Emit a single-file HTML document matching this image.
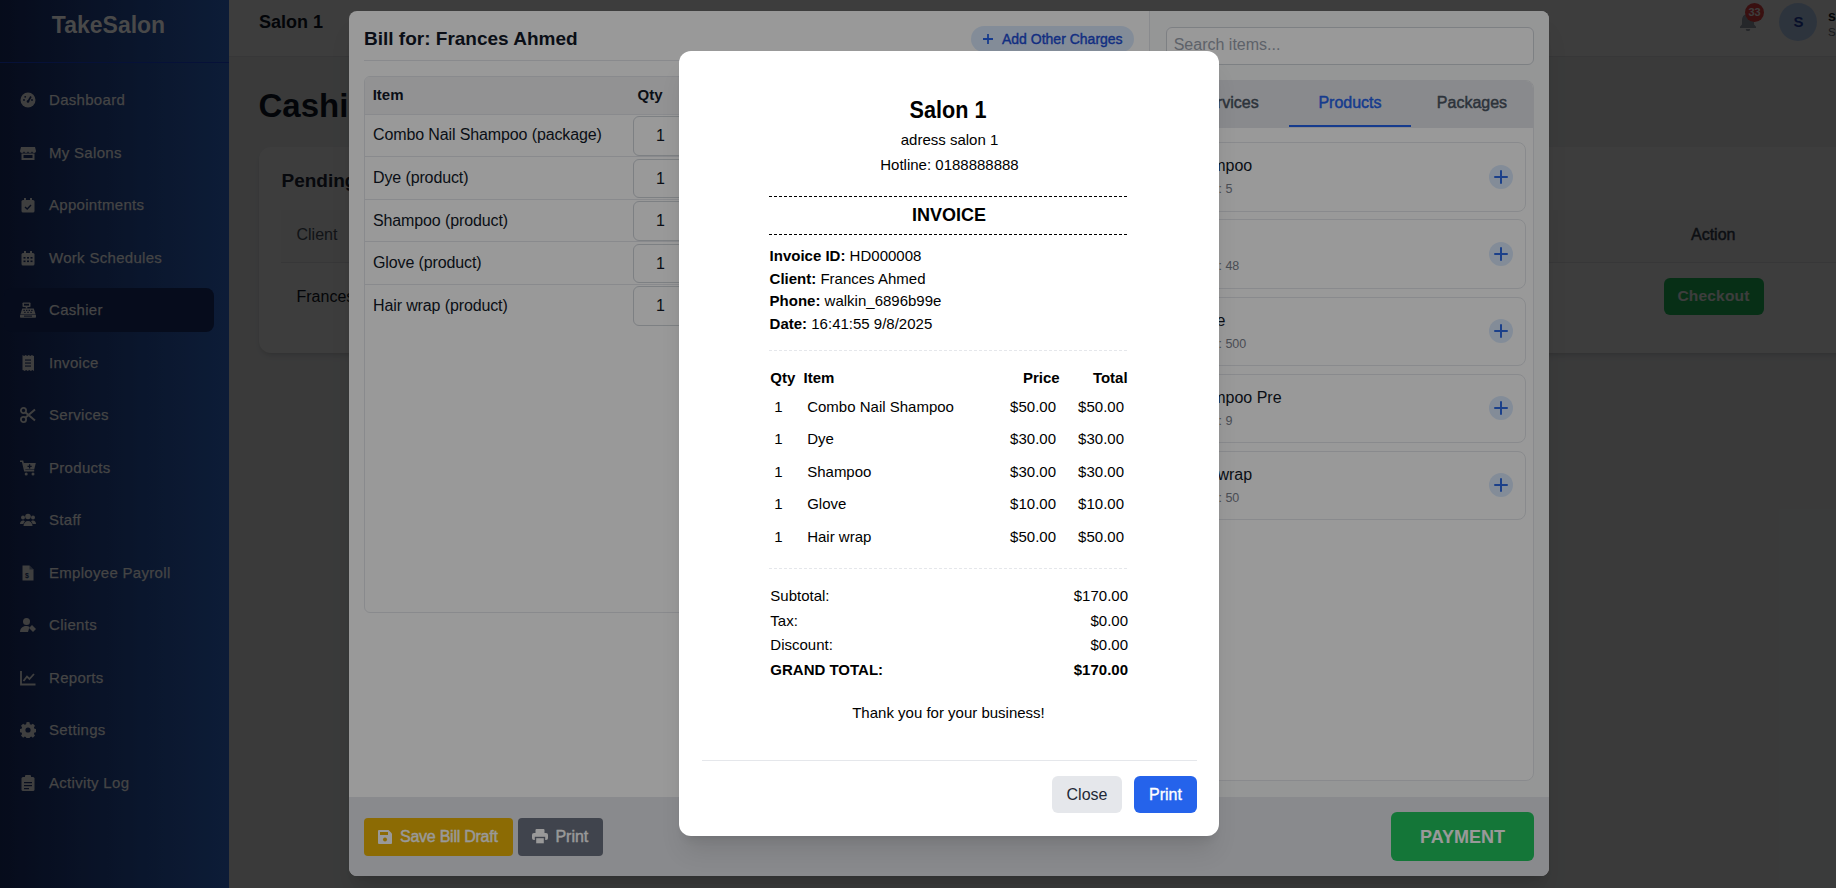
<!DOCTYPE html>
<html><head><meta charset="utf-8">
<style>
*{box-sizing:border-box;margin:0;padding:0}
html,body{width:1836px;height:888px;overflow:hidden}
body{position:relative;font-family:"Liberation Sans",sans-serif;background:#f3f4f6;color:#111827}
.abs{position:absolute}
/* sidebar */
#sb{position:absolute;left:0;top:0;width:229px;height:888px;background:linear-gradient(90deg,#0b142e 0%,#16305d 100%)}
#sb .logo{position:absolute;left:0;top:0;width:217px;height:62px;border-bottom:0;text-align:center;font-size:23px;font-weight:700;color:#7a7a7a;line-height:50px}
#sb .it{position:absolute;left:4px;width:210px;height:44px;border-radius:8px;color:#737373;font-size:15px;letter-spacing:.3px;-webkit-text-stroke:.25px #737373}
#sb .it span{position:absolute;left:45px;top:0;line-height:44.6px}
#sb .it svg{position:absolute;left:16px;top:14px;width:16px;height:16px;fill:#6a6a6a}
#sb .act{background:#0a1430}
/* header */
#hd{position:absolute;left:229px;top:0;width:1607px;height:57px;background:#fff;border-bottom:1px solid #e5e7eb}
#main{position:absolute;left:229px;top:56px;width:1607px;height:832px}
#ov1{position:absolute;left:229px;top:0;width:1607px;height:888px;background:rgba(0,0,0,0.6)}
/* bill modal */
#bill{position:absolute;left:349px;top:11px;width:1200px;height:865px;background:#fff;border-radius:8px;box-shadow:0 20px 25px -5px rgba(0,0,0,.1),0 8px 10px -6px rgba(0,0,0,.1);overflow:hidden}
#ov2{position:absolute;left:0;top:0;width:1836px;height:888px;background:rgba(0,0,0,0.4)}
#inv{position:absolute;left:679px;top:51px;width:540px;height:785px;background:#fff;border-radius:12px;box-shadow:0 20px 25px -5px rgba(0,0,0,.1),0 8px 10px -6px rgba(0,0,0,.1)}

#bill .brow:last-child{border-bottom:0}
#bill .brow{left:0;width:770px;height:42.6px;border-bottom:1px solid #e5e7eb;color:#111827}
#bill .qin{width:120px;height:39.6px;border:1px solid #d1d5db;border-radius:6px}
#bill .qin span{position:absolute;right:86.5px;top:9px;font-size:16px;line-height:20px}
#bill .tab{top:-1px;width:122.6px;height:46.7px;line-height:46.7px;text-align:center;font-size:16px;font-weight:400;-webkit-text-stroke:.45px currentColor}
#bill .card{left:7px;width:352px;height:69.3px;border:1px solid #e5e7eb;border-radius:8px}
#bill .pl{left:314px;top:21.7px;width:24px;height:24px;border-radius:50%;background:#dbeafe}
#bill .btn{height:38.6px;border-radius:4px;color:#fff;font-size:16px;font-weight:400;-webkit-text-stroke:.4px #fff;line-height:38.6px;white-space:nowrap}
#inv .dash{height:1px;background:repeating-linear-gradient(90deg,#000 0 3px,transparent 3px 5px)}
#inv .ldash{height:1px;background:repeating-linear-gradient(90deg,#e5e7eb 0 3px,transparent 3px 5px)}
#inv .ibtn{height:36.6px;border-radius:6px;font-size:16px;line-height:37.6px;text-align:center}
</style></head><body>

<div id="sb">
  <div class="logo">TakeSalon</div><div class="abs" style="left:0;top:62px;width:229px;height:1px;background:#0b1d5e"></div>
  <div class="it" style="top:78.0px"><svg viewBox="0 0 16 16"><circle cx="8" cy="8" r="7.5"/><path d="M8 9.5 L11 4.5" stroke="#0c1733" stroke-width="1.6"/><circle cx="8" cy="9.5" r="1.3" fill="#0c1733"/><circle cx="4" cy="8" r=".9" fill="#0c1733"/><circle cx="5.2" cy="4.8" r=".9" fill="#0c1733"/><circle cx="12" cy="8" r=".9" fill="#0c1733"/></svg><span>Dashboard</span></div>
  <div class="it" style="top:130.5px"><svg viewBox="0 0 16 16"><path d="M1 2h14l1 4c0 1.2-1 2-2 2s-2-.8-2-2c0 1.2-1 2-2 2s-2-.8-2-2c0 1.2-1 2-2 2s-2-.8-2-2c0 1.2-1 2-2 2S0 7.2 0 6z"/><path d="M1.5 8.5h13V15h-13z"/><rect x="3.5" y="10" width="9" height="3" fill="#0c1733"/></svg><span>My Salons</span></div>
  <div class="it" style="top:183.0px"><svg viewBox="0 0 16 16"><rect x="1.5" y="3" width="13" height="12.5" rx="1.5"/><rect x="4" y="1" width="2" height="3"/><rect x="10" y="1" width="2" height="3"/><path d="M5 10 L7.2 12 L11 8" stroke="#0c1733" stroke-width="1.4" fill="none"/></svg><span>Appointments</span></div>
  <div class="it" style="top:235.5px"><svg viewBox="0 0 16 16"><rect x="1.5" y="3" width="13" height="12.5" rx="1.5"/><rect x="4" y="1" width="2" height="3"/><rect x="10" y="1" width="2" height="3"/><g fill="#0c1733"><rect x="3.5" y="7" width="2" height="1.6"/><rect x="7" y="7" width="2" height="1.6"/><rect x="10.5" y="7" width="2" height="1.6"/><rect x="3.5" y="10.5" width="2" height="1.6"/><rect x="7" y="10.5" width="2" height="1.6"/><rect x="10.5" y="10.5" width="2" height="1.6"/></g></svg><span>Work Schedules</span></div>
  <div class="it act" style="top:288.0px"><svg viewBox="0 0 16 16"><rect x="2.5" y="0.5" width="8" height="4.5" rx=".8"/><rect x="4" y="1.8" width="5" height="1.8" fill="#0a1430"/><rect x="5.7" y="5" width="1.6" height="1.5"/><path d="M2.2 6.5h11.6l1.7 5.5H.5z"/><rect x="0" y="12.5" width="16" height="3.3" rx=".8"/><rect x="4" y="13.6" width="8" height="1" fill="#0a1430"/><g fill="#0a1430"><rect x="3.4" y="7.8" width="1.4" height="1.1"/><rect x="6" y="7.8" width="1.4" height="1.1"/><rect x="8.6" y="7.8" width="1.4" height="1.1"/><rect x="11.2" y="7.8" width="1.4" height="1.1"/><rect x="4.2" y="9.8" width="1.4" height="1.1"/><rect x="7.3" y="9.8" width="1.4" height="1.1"/><rect x="10.4" y="9.8" width="1.4" height="1.1"/></g></svg><span>Cashier</span></div>
  <div class="it" style="top:340.5px"><svg viewBox="0 0 16 16"><path d="M2.5 0l1.6 1 1.6-1 1.5 1 1.6-1 1.6 1 1.5-1 1.6 1 .5-.3V16l-1.6-1-1.5 1-1.6-1-1.6 1-1.5-1-1.6 1-1.6-1-.5.3z"/><g fill="#0c1733"><rect x="5" y="4.5" width="6" height="1.1"/><rect x="5" y="7.5" width="6" height="1.1"/><rect x="5" y="10.5" width="6" height="1.1"/></g></svg><span>Invoice</span></div>
  <div class="it" style="top:393.0px"><svg viewBox="0 0 16 16"><circle cx="3.5" cy="3.5" r="2.6" fill="none" stroke="#6a6a6a" stroke-width="1.8"/><circle cx="3.5" cy="12.5" r="2.6" fill="none" stroke="#6a6a6a" stroke-width="1.8"/><path d="M5.3 5.2 L15 13.5 M5.3 10.8 L15 2.5" stroke="#6a6a6a" stroke-width="2"/></svg><span>Services</span></div>
  <div class="it" style="top:445.5px"><svg viewBox="0 0 16 16"><path d="M0 1.2h2.6l2.2 9.6h9.4" fill="none" stroke="#6a6a6a" stroke-width="1.6"/><path d="M3.4 3h12.4l-1.6 6.6H4.9z"/><path d="M9.6 4.2v4.2M7.5 6.3h4.2" stroke="#0c1733" stroke-width="1.3"/><circle cx="6.2" cy="14" r="1.5"/><circle cx="13" cy="14" r="1.5"/></svg><span>Products</span></div>
  <div class="it" style="top:498.0px"><svg viewBox="0 0 16 16"><circle cx="8" cy="4.5" r="2.8"/><circle cx="3" cy="5.5" r="2"/><circle cx="13" cy="5.5" r="2"/><path d="M3.5 14c0-3 2-5 4.5-5s4.5 2 4.5 5z"/><path d="M0 12c0-2 1.3-3.5 3-3.5 1 0 1.5.3 2 .7-1 1-1.5 2-1.6 2.8z"/><path d="M16 12c0-2-1.3-3.5-3-3.5-1 0-1.5.3-2 .7 1 1 1.5 2 1.6 2.8z"/></svg><span>Staff</span></div>
  <div class="it" style="top:550.5px"><svg viewBox="0 0 16 16"><path d="M2.5 0.5h7l4 4v11h-11z"/><path d="M9.5 0.5v4h4" fill="#0c1733" opacity=".5"/><text x="5" y="13" font-size="7" font-family="Liberation Sans" fill="#0c1733" font-weight="700">$</text></svg><span>Employee Payroll</span></div>
  <div class="it" style="top:603.0px"><svg viewBox="0 0 16 16"><circle cx="6.5" cy="4.5" r="3.5"/><path d="M0 15c0-3.5 2.7-6 6-6 1.5 0 2.5.4 3.5 1l-1.5 5z"/><path d="M9 11l3-3 4 4-3 3z"/></svg><span>Clients</span></div>
  <div class="it" style="top:655.5px"><svg viewBox="0 0 16 16"><path d="M1 1v13.5h14.5" stroke="#6a6a6a" stroke-width="1.8" fill="none"/><path d="M3.5 11 L7 6.5 L9.5 9 L14 4" stroke="#6a6a6a" stroke-width="1.8" fill="none"/></svg><span>Reports</span></div>
  <div class="it" style="top:708.0px"><svg viewBox="0 0 16 16"><path d="M8 0l1.5 .2.4 2 1.3.6 1.7-1.1 2.1 2.1-1.1 1.7.6 1.3 2 .4v3l-2 .4-.6 1.3 1.1 1.7-2.1 2.1-1.7-1.1-1.3.6-.4 2h-3l-.4-2-1.3-.6-1.7 1.1-2.1-2.1 1.1-1.7-.6-1.3-2-.4v-3l2-.4.6-1.3-1.1-1.7 2.1-2.1 1.7 1.1 1.3-.6.4-2z"/><circle cx="8" cy="8" r="2.6" fill="#0c1733"/></svg><span>Settings</span></div>
  <div class="it" style="top:760.5px"><svg viewBox="0 0 16 16"><rect x="1.5" y="2" width="13" height="14" rx="1.5"/><rect x="5" y="0" width="6" height="3.5" rx="1"/><g fill="#0c1733"><rect x="4" y="7" width="8" height="1.2"/><rect x="4" y="10" width="8" height="1.2"/><rect x="4" y="13" width="5" height="1.2"/></g></svg><span>Activity Log</span></div>
</div>
<div id="hd">
  <div class="abs" style="left:30px;top:8px;font-size:18px;font-weight:700;line-height:28px;color:#111827">Salon 1</div>
  <svg class="abs" style="left:1510px;top:12px;width:18px;height:19px" viewBox="0 0 18 19"><path d="M9 0c.8 0 1.3.6 1.3 1.3v.7c3 .6 4.7 3 4.7 6v4.5l2 2.2v1.3H1v-1.3l2-2.2V8c0-3 1.7-5.4 4.7-6v-.7C7.7.6 8.2 0 9 0z" fill="#9ca3af"/><path d="M6.8 17h4.4a2.2 2.2 0 0 1-4.4 0z" fill="#9ca3af"/></svg>
  <div class="abs" style="left:1516px;top:3px;width:19px;height:19px;border-radius:50%;background:#ef4444;color:#fff;font-size:11px;line-height:19px;text-align:center;font-weight:700">33</div>
  <div class="abs" style="left:1550px;top:3px;width:38px;height:38px;border-radius:50%;background:#bfdbfe;color:#1e40af;font-size:15px;font-weight:700;line-height:38px;text-align:center;padding-left:1px">S</div>
  <div class="abs" style="left:1599px;top:6px;font-size:14px;font-weight:700;line-height:20px;color:#111827;white-space:nowrap">salon_owner</div>
  <div class="abs" style="left:1599px;top:24px;font-size:11.5px;line-height:16px;color:#6b7280;white-space:nowrap">Salon Owner</div>
</div>
<div id="main">
  <div class="abs" style="left:29.5px;top:30.4px;font-size:33px;font-weight:700;line-height:40px;letter-spacing:0;color:#111827;white-space:nowrap">Cashier</div>
  <div class="abs" style="left:29.5px;top:90.5px;width:1640px;height:206.5px;background:#fff;border-radius:12px;box-shadow:0 4px 6px -1px rgba(0,0,0,.1),0 2px 4px -2px rgba(0,0,0,.1)">
    <div class="abs" style="left:23px;top:20.7px;font-size:19px;font-weight:700;line-height:28px;color:#1f2937;white-space:nowrap">Pending Bills</div>
    <div class="abs" style="left:22.5px;top:63px;width:1594px;height:53px;background:#f9fafb;border-bottom:1px solid #e5e7eb"></div>
    <div class="abs" style="left:38px;top:77.5px;font-size:16px;line-height:22px;color:#4b5563;white-space:nowrap">Client</div>
    <div class="abs" style="left:1432.5px;top:77.5px;font-size:16px;font-weight:400;-webkit-text-stroke:.45px #374151;line-height:22px;color:#374151;white-space:nowrap">Action</div>
    <div class="abs" style="left:38px;top:139px;font-size:16px;line-height:22px;color:#111827;white-space:nowrap">Frances Ahmed</div>
    <div class="abs" style="left:1405px;top:131px;width:100px;height:37px;border-radius:6px;background:#22c55e;color:#fff;font-size:15.5px;font-weight:700;line-height:35px;text-align:center;letter-spacing:.2px">Checkout</div>
  </div>
</div>
<div id="ov1"></div>

<div id="bill">
  <div class="abs" style="left:15px;top:16px;font-size:19px;font-weight:700;line-height:24px;color:#111827;white-space:nowrap">Bill for: Frances Ahmed</div>
  <div class="abs" style="left:622px;top:15px;width:163px;height:26px;border-radius:13px;background:#dbeafe;color:#1d4ed8;font-size:14px;font-weight:400;-webkit-text-stroke:.4px #1d4ed8;line-height:26px;white-space:nowrap"><svg class="abs" style="left:12px;top:8px" width="10" height="10" viewBox="0 0 10 10"><path d="M5 0v10M0 5h10" stroke="#2563eb" stroke-width="1.8"/></svg><span class="abs" style="left:31px;top:-0.3px;letter-spacing:0">Add Other Charges</span></div>
  <div class="abs" style="left:15px;top:49px;width:770px;height:1px;background:#e5e7eb"></div>
  <div class="abs" style="left:15px;top:65px;width:770px;height:537px;border:1px solid #e5e7eb;border-radius:6px;overflow:hidden">
    <div class="abs" style="left:0;top:0;width:770px;height:38.4px;background:#f3f4f6;border-bottom:1px solid #e5e7eb"></div>
    <div class="abs" style="left:7.7px;top:8px;font-size:15px;font-weight:700;line-height:20px;color:#111827">Item</div>
    <div class="abs" style="left:272.5px;top:8px;font-size:15px;font-weight:700;line-height:20px;color:#111827">Qty</div>
    <div class="abs brow" style="top:37.4px"><div class="abs" style="left:8px;top:10px;font-size:16px;line-height:22px;letter-spacing:-.12px;white-space:nowrap">Combo Nail Shampoo (package)</div><div class="abs qin" style="left:267.5px;top:1.6px"><span>1</span></div></div>
    <div class="abs brow" style="top:80.0px"><div class="abs" style="left:8px;top:10px;font-size:16px;line-height:22px;letter-spacing:-.12px;white-space:nowrap">Dye (product)</div><div class="abs qin" style="left:267.5px;top:1.6px"><span>1</span></div></div>
    <div class="abs brow" style="top:122.6px"><div class="abs" style="left:8px;top:10px;font-size:16px;line-height:22px;letter-spacing:-.12px;white-space:nowrap">Shampoo (product)</div><div class="abs qin" style="left:267.5px;top:1.6px"><span>1</span></div></div>
    <div class="abs brow" style="top:165.2px"><div class="abs" style="left:8px;top:10px;font-size:16px;line-height:22px;letter-spacing:-.12px;white-space:nowrap">Glove (product)</div><div class="abs qin" style="left:267.5px;top:1.6px"><span>1</span></div></div>
    <div class="abs brow" style="top:207.8px"><div class="abs" style="left:8px;top:10px;font-size:16px;line-height:22px;letter-spacing:-.12px;white-space:nowrap">Hair wrap (product)</div><div class="abs qin" style="left:267.5px;top:1.6px"><span>1</span></div></div>
  </div>
  <div class="abs" style="left:800px;top:0;width:400px;height:785.5px;background:#f9fafb;border-left:1px solid #e5e7eb"></div>
  <div class="abs" style="left:816.7px;top:15.7px;width:368px;height:38px;border:1px solid #d1d5db;border-radius:6px;background:#fff"><span class="abs" style="left:7px;top:7px;font-size:16px;line-height:20px;color:#9ca3af;white-space:nowrap">Search items...</span></div>
  <div class="abs" style="left:816.7px;top:69px;width:368px;height:701px;border:1px solid #e5e7eb;border-radius:8px;overflow:hidden;background:#fff">
    <div class="abs" style="left:0;top:0;width:366px;height:46.7px;background:#e5e7eb"></div>
    <div class="abs tab" style="left:0;color:#4b5563">Services</div>
    <div class="abs tab" style="left:122px;color:#2563eb">Products</div>
    <div class="abs tab" style="left:244px;color:#4b5563">Packages</div>
    <div class="abs" style="left:122px;top:43.9px;width:122.6px;height:2px;background:#2563eb"></div>
    <div class="abs card" style="top:61.3px"><div class="abs" style="left:9px;top:11px;font-size:16px;line-height:24px;color:#111827;white-space:nowrap">Shampoo</div><div class="abs" style="left:12.5px;top:37px;font-size:12.5px;line-height:18px;color:#7c828d;white-space:nowrap">Stock: 5</div><div class="abs pl"><svg viewBox="0 0 24 24" width="24" height="24"><path d="M12 6v12M6 12h12" stroke="#2e6be6" stroke-width="2" stroke-linecap="round"/></svg></div></div>
    <div class="abs card" style="top:138.4px"><div class="abs" style="left:9px;top:11px;font-size:16px;line-height:24px;color:#111827;white-space:nowrap">Dye</div><div class="abs" style="left:12.5px;top:37px;font-size:12.5px;line-height:18px;color:#7c828d;white-space:nowrap">Stock: 48</div><div class="abs pl"><svg viewBox="0 0 24 24" width="24" height="24"><path d="M12 6v12M6 12h12" stroke="#2e6be6" stroke-width="2" stroke-linecap="round"/></svg></div></div>
    <div class="abs card" style="top:215.5px"><div class="abs" style="left:9px;top:11px;font-size:16px;line-height:24px;color:#111827;white-space:nowrap">Glove</div><div class="abs" style="left:12.5px;top:37px;font-size:12.5px;line-height:18px;color:#7c828d;white-space:nowrap">Stock: 500</div><div class="abs pl"><svg viewBox="0 0 24 24" width="24" height="24"><path d="M12 6v12M6 12h12" stroke="#2e6be6" stroke-width="2" stroke-linecap="round"/></svg></div></div>
    <div class="abs card" style="top:292.6px"><div class="abs" style="left:9px;top:11px;font-size:16px;line-height:24px;color:#111827;white-space:nowrap">Shampoo Pre</div><div class="abs" style="left:12.5px;top:37px;font-size:12.5px;line-height:18px;color:#7c828d;white-space:nowrap">Stock: 9</div><div class="abs pl"><svg viewBox="0 0 24 24" width="24" height="24"><path d="M12 6v12M6 12h12" stroke="#2e6be6" stroke-width="2" stroke-linecap="round"/></svg></div></div>
    <div class="abs card" style="top:369.7px"><div class="abs" style="left:9px;top:11px;font-size:16px;line-height:24px;color:#111827;white-space:nowrap">Hair wrap</div><div class="abs" style="left:12.5px;top:37px;font-size:12.5px;line-height:18px;color:#7c828d;white-space:nowrap">Stock: 50</div><div class="abs pl"><svg viewBox="0 0 24 24" width="24" height="24"><path d="M12 6v12M6 12h12" stroke="#2e6be6" stroke-width="2" stroke-linecap="round"/></svg></div></div>
  </div>
  <div class="abs" style="left:0;top:785.5px;width:1200px;height:80px;background:#e5e7eb;border-top:1px solid #e5e7eb"></div>
  <div class="abs btn" style="left:15px;top:806.8px;width:149px;background:#eab308"><svg class="abs" style="left:14px;top:12px" width="14" height="14" viewBox="0 0 14 14"><path d="M1 0h9.5L14 3.5V13a1 1 0 0 1-1 1H1a1 1 0 0 1-1-1V1a1 1 0 0 1 1-1z" fill="#fff"/><rect x="2" y="2" width="8" height="3" fill="#eab308"/><circle cx="7" cy="9.5" r="2" fill="#eab308"/></svg><span class="abs" style="left:36px;top:0;letter-spacing:-.25px">Save Bill Draft</span></div>
  <div class="abs btn" style="left:169.4px;top:806.8px;width:84.6px;background:#6b7280"><svg class="abs" style="left:14px;top:11px" width="16" height="15" viewBox="0 0 16 15"><rect x="3.5" y="0" width="9" height="5" rx="1" fill="#fff"/><rect x="0" y="4" width="16" height="7" rx="2" fill="#fff"/><rect x="3.5" y="8.5" width="9" height="6.5" fill="#fff" stroke="#6b7280" stroke-width="1.4"/></svg><span class="abs" style="left:37px;top:0">Print</span></div>
  <div class="abs" style="left:1042.2px;top:801.2px;width:142.6px;height:49px;border-radius:6px;background:#22c55e;color:#fff;font-size:18px;font-weight:700;line-height:50px;text-align:center">PAYMENT</div>
</div>
<div id="ov2"></div>
<div id="inv">
  <div class="abs" style="left:68.5px;width:400px;text-align:center;top:41.68px;font-size:24px;line-height:34px;font-weight:700;color:#000;white-space:nowrap;transform:scaleX(0.9)">Salon 1</div>
  <div class="abs" style="left:70.5px;width:400px;text-align:center;top:78.20px;font-size:15px;line-height:21px;color:#000;white-space:nowrap;">adress salon 1</div>
  <div class="abs" style="left:70.5px;width:400px;text-align:center;top:103.30px;font-size:15px;line-height:21px;color:#000;white-space:nowrap;">Hotline: 0188888888</div>
  <div class="abs dash" style="left:90px;top:145px;width:360px"></div>
  <div class="abs" style="left:70px;width:400px;text-align:center;top:151.86px;font-size:18px;line-height:25px;font-weight:700;color:#000;white-space:nowrap;">INVOICE</div>
  <div class="abs dash" style="left:90px;top:183px;width:360px"></div>
  <div class="abs" style="left:90.6px;top:194.20px;font-size:15px;line-height:21px;color:#000;white-space:nowrap;"><b>Invoice ID:</b> HD000008</div>
  <div class="abs" style="left:90.6px;top:217.10px;font-size:15px;line-height:21px;color:#000;white-space:nowrap;"><b>Client:</b> Frances Ahmed</div>
  <div class="abs" style="left:90.6px;top:239.10px;font-size:15px;line-height:21px;color:#000;white-space:nowrap;"><b>Phone:</b> walkin_6896b99e</div>
  <div class="abs" style="left:90.6px;top:262.20px;font-size:15px;line-height:21px;color:#000;white-space:nowrap;"><b>Date:</b> 16:41:55 9/8/2025</div>
  <div class="abs ldash" style="left:90px;top:299px;width:360px"></div>
  <div class="abs" style="left:91.3px;top:316.10px;font-size:15px;line-height:21px;font-weight:700;color:#000;white-space:nowrap;">Qty</div>
  <div class="abs" style="left:124.5px;top:316.10px;font-size:15px;line-height:21px;font-weight:700;color:#000;white-space:nowrap;">Item</div>
  <div class="abs" style="right:159.39999999999998px;top:316.10px;font-size:15px;line-height:21px;font-weight:700;color:#000;white-space:nowrap;">Price</div>
  <div class="abs" style="right:91.39999999999998px;top:316.10px;font-size:15px;line-height:21px;font-weight:700;color:#000;white-space:nowrap;">Total</div>
  <div class="abs" style="left:95.3px;top:345.30px;font-size:15px;line-height:21px;color:#000;white-space:nowrap;">1</div>
  <div class="abs" style="left:128.2px;top:345.30px;font-size:15px;line-height:21px;color:#000;white-space:nowrap;">Combo Nail Shampoo</div>
  <div class="abs" style="right:163px;top:345.30px;font-size:15px;line-height:21px;color:#000;white-space:nowrap;">$50.00</div>
  <div class="abs" style="right:95px;top:345.30px;font-size:15px;line-height:21px;color:#000;white-space:nowrap;">$50.00</div>
  <div class="abs" style="left:95.3px;top:376.90px;font-size:15px;line-height:21px;color:#000;white-space:nowrap;">1</div>
  <div class="abs" style="left:128.2px;top:376.90px;font-size:15px;line-height:21px;color:#000;white-space:nowrap;">Dye</div>
  <div class="abs" style="right:163px;top:376.90px;font-size:15px;line-height:21px;color:#000;white-space:nowrap;">$30.00</div>
  <div class="abs" style="right:95px;top:376.90px;font-size:15px;line-height:21px;color:#000;white-space:nowrap;">$30.00</div>
  <div class="abs" style="left:95.3px;top:410.30px;font-size:15px;line-height:21px;color:#000;white-space:nowrap;">1</div>
  <div class="abs" style="left:128.2px;top:410.30px;font-size:15px;line-height:21px;color:#000;white-space:nowrap;">Shampoo</div>
  <div class="abs" style="right:163px;top:410.30px;font-size:15px;line-height:21px;color:#000;white-space:nowrap;">$30.00</div>
  <div class="abs" style="right:95px;top:410.30px;font-size:15px;line-height:21px;color:#000;white-space:nowrap;">$30.00</div>
  <div class="abs" style="left:95.3px;top:441.90px;font-size:15px;line-height:21px;color:#000;white-space:nowrap;">1</div>
  <div class="abs" style="left:128.2px;top:441.90px;font-size:15px;line-height:21px;color:#000;white-space:nowrap;">Glove</div>
  <div class="abs" style="right:163px;top:441.90px;font-size:15px;line-height:21px;color:#000;white-space:nowrap;">$10.00</div>
  <div class="abs" style="right:95px;top:441.90px;font-size:15px;line-height:21px;color:#000;white-space:nowrap;">$10.00</div>
  <div class="abs" style="left:95.3px;top:475.30px;font-size:15px;line-height:21px;color:#000;white-space:nowrap;">1</div>
  <div class="abs" style="left:128.2px;top:475.30px;font-size:15px;line-height:21px;color:#000;white-space:nowrap;">Hair wrap</div>
  <div class="abs" style="right:163px;top:475.30px;font-size:15px;line-height:21px;color:#000;white-space:nowrap;">$50.00</div>
  <div class="abs" style="right:95px;top:475.30px;font-size:15px;line-height:21px;color:#000;white-space:nowrap;">$50.00</div>
  <div class="abs ldash" style="left:90px;top:517px;width:360px"></div>
  <div class="abs" style="left:91.3px;top:533.70px;font-size:15px;line-height:21px;color:#000;white-space:nowrap;">Subtotal:</div>
  <div class="abs" style="right:91px;top:533.70px;font-size:15px;line-height:21px;color:#000;white-space:nowrap;">$170.00</div>
  <div class="abs" style="left:91.3px;top:558.60px;font-size:15px;line-height:21px;color:#000;white-space:nowrap;">Tax:</div>
  <div class="abs" style="right:91px;top:558.60px;font-size:15px;line-height:21px;color:#000;white-space:nowrap;">$0.00</div>
  <div class="abs" style="left:91.3px;top:583.00px;font-size:15px;line-height:21px;color:#000;white-space:nowrap;">Discount:</div>
  <div class="abs" style="right:91px;top:583.00px;font-size:15px;line-height:21px;color:#000;white-space:nowrap;">$0.00</div>
  <div class="abs" style="left:91.3px;top:608.20px;font-size:15px;line-height:21px;font-weight:700;color:#000;white-space:nowrap;">GRAND TOTAL:</div>
  <div class="abs" style="right:91px;top:608.20px;font-size:15px;line-height:21px;font-weight:700;color:#000;white-space:nowrap;">$170.00</div>
  <div class="abs" style="left:69.5px;width:400px;text-align:center;top:651.30px;font-size:15px;line-height:21px;color:#000;white-space:nowrap;">Thank you for your business!</div>
  <div class="abs" style="left:23px;top:709px;width:495px;height:1px;background:#e5e7eb"></div>
  <div class="abs ibtn" style="left:373px;top:725px;width:70px;background:#e5e7eb;color:#1f2937">Close</div>
  <div class="abs ibtn" style="left:455px;top:725px;width:63px;background:#2563eb;color:#fff;-webkit-text-stroke:.35px #fff">Print</div>
</div>
</body></html>
